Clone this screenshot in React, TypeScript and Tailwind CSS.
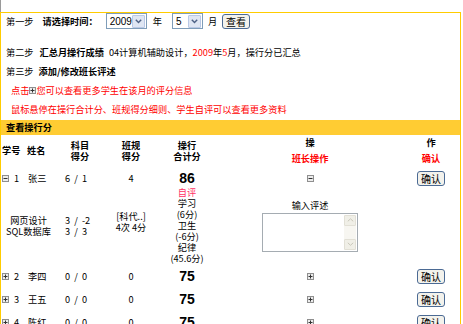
import React from "react";

const cols = "grid grid-cols-[25px_30px_48px_54px_58px_190px_50px]";

interface Student {
  id: number;
  name: string;
  subject: string;
  rule: string;
  total: string;
}

const students: Array<Student> = [
  { id: 2, name: "李四", subject: "0 / 0", rule: "0", total: "75" },
  { id: 3, name: "王五", subject: "0 / 0", rule: "0", total: "75" },
  { id: 4, name: "陈红", subject: "0 / 0", rule: "0", total: "75" },
];

function Toggle({ open }: { open?: boolean }) {
  return (
    <span className="inline-flex h-[7px] w-[7px] shrink-0 items-center justify-center border border-[#8f8f8f] bg-[#ececec]">
      <svg width="5" height="5" viewBox="0 0 5 5">
        <path
          d={open ? "M0.5 2.5h4" : "M0.5 2.5h4M2.5 0.5v4"}
          stroke="#333"
          strokeWidth="1"
        />
      </svg>
    </span>
  );
}

function Select({ value, className }: { value: string; className: string }) {
  return (
    <div
      className={
        "flex h-[16px] items-center justify-between border border-[#7f9db9] bg-white " +
        className
      }
    >
      <span className="pl-[3px] font-['Liberation_Sans',sans-serif] text-[10px] text-black">
        {value}
      </span>
      <span className="mr-px flex h-[13px] w-[13px] items-center justify-center rounded-[1px] border border-[#b9c8e6] bg-[#dfe6f3]">
        <svg width="7" height="5" viewBox="0 0 7 5">
          <path d="M0.8 0.8L3.5 3.6L6.2 0.8" fill="none" stroke="#4d6185" strokeWidth="1.4" />
        </svg>
      </span>
    </div>
  );
}

function Button({ label, className }: { label: string; className: string }) {
  return (
    <span
      className={
        "flex h-[15px] w-[28px] items-center justify-center rounded-[3px] border border-[#4b6a94] bg-[#f3f2ec] text-[10px] text-black " +
        className
      }
    >
      {label}
    </span>
  );
}

function StudentRow({ s }: { s: Student }) {
  return (
    <div className={cols + " h-[23px] items-center"}>
      <div className="flex items-center pl-px">
        <Toggle />
        <span className="ml-[5px]">{s.id}</span>
      </div>
      <div className="pl-[2px]">{s.name}</div>
      <div className="whitespace-pre pl-[9px]">{s.subject.replace(/ /g, "  ")}</div>
      <div className="text-center">{s.rule}</div>
      <div className="text-center font-['Liberation_Sans',sans-serif] text-[14px] font-bold">
        {s.total}
      </div>
      <div className="flex justify-center pr-[2px]">
        <Toggle />
      </div>
      <div className="flex justify-center">
        <Button label="确认" className="" />
      </div>
    </div>
  );
}

export default function App() {
  return (
    <div className="h-[324px] w-[463px] overflow-hidden bg-white font-['Noto_Sans_CJK_SC',sans-serif] text-[9.2px] leading-[11px] text-black">
      <div className="h-[12px] w-px bg-[#9a9a9a]" />
      <div className="w-[461px] border border-[#ffcc00]">
        {/* step 1 */}
        <div className="flex h-[16px] items-center pl-[5px]">
          <span>第一步</span>
          <span className="ml-[9px] font-bold">请选择时间：</span>
          <Select value="2009" className="ml-[8px] w-[41px]" />
          <span className="ml-[6px]">年</span>
          <Select value="5" className="ml-[10px] w-[31px]" />
          <span className="ml-[5px]">月</span>
          <Button label="查看" className="ml-[5px]" />
        </div>

        {/* step 2 */}
        <div className="mt-[15px] flex h-[16px] items-center pl-[5px]">
          <span>第二步</span>
          <span className="ml-[6px] font-bold">汇总月操行成绩</span>
          <span className="ml-[5px]">04计算机辅助设计，</span>
          <span className="text-[#ff0000]">2009</span>
          <span>年</span>
          <span className="text-[#ff0000]">5</span>
          <span>月，操行分已汇总</span>
        </div>

        {/* step 3 */}
        <div className="mt-[3px] flex h-[16px] items-center pl-[5px]">
          <span>第三步</span>
          <span className="ml-[5px] font-bold">添加/修改班长评述</span>
        </div>

        <div className="mt-[4px] flex h-[15px] items-center pl-[10px] text-[#ff0000]">
          <span>点击</span>
          <Toggle />
          <span>您可以查看更多学生在该月的评分信息</span>
        </div>
        <div className="mt-[3px] flex h-[16px] items-center pl-[10px] text-[#ff0000]">
          鼠标悬停在操行合计分、班规得分细则、学生自评可以查看更多资料
        </div>

        {/* bar */}
        <div className="mt-[3px] flex h-[15px] items-center bg-[#ffcc33] pl-[5px] font-bold">
          查看操行分
        </div>

        {/* header */}
        <div className={cols + " h-[31px] items-center font-bold"}>
          <div className="pl-px">学号</div>
          <div className="pl-[1px]">姓名</div>
          <div className="text-center">
            科目
            <br />
            得分
          </div>
          <div className="text-center">
            班规
            <br />
            得分
          </div>
          <div className="text-center">
            操行
            <br />
            合计分
          </div>
          <div className="flex flex-col items-center gap-[4.5px] pr-[2px]">
            <span>操</span>
            <span className="text-[#ff0000]">班长操作</span>
          </div>
          <div className="flex flex-col items-center gap-[4.5px]">
            <span>作</span>
            <span className="text-[#ff0000]">确认</span>
          </div>
        </div>

        {/* row 1 expanded */}
        <div className={cols + " mt-[4px] h-[16px] items-center"}>
          <div className="flex items-center pl-px">
            <Toggle open />
            <span className="ml-[5px]">1</span>
          </div>
          <div className="pl-[2px]">张三</div>
          <div className="whitespace-pre pl-[9px]">6  /  1</div>
          <div className="text-center">4</div>
          <div className="text-center font-['Liberation_Sans',sans-serif] text-[14px] font-bold">
            86
          </div>
          <div className="flex justify-center pr-[2px]">
            <Toggle open />
          </div>
          <div className="flex justify-center">
            <Button label="确认" className="" />
          </div>
        </div>

        <div className={cols + " h-[79px] items-center"}>
          <div className="col-span-2 text-center">
            网页设计
            <br />
            SQL数据库
          </div>
          <div className="whitespace-pre pl-[9px]">
            {"3  /  -2"}
            <br />
            {"3  /  3"}
          </div>
          <div className="pb-[8px] text-center">
            [科代..]
            <br />
            4次 4分
          </div>
          <div className="text-center leading-[11px]">
            <span className="text-[#ff3366]">自评</span>
            <br />
            学习
            <br />
            (6分)
            <br />
            卫生
            <br />
            (-6分)
            <br />
            纪律
            <br />
            (45.6分)
          </div>
          <div className="flex flex-col items-center pr-[2px]">
            <span>输入评述</span>
            <div className="mt-[2px] flex h-[39px] w-[96px] justify-end border border-[#a5acb2] bg-white p-px">
              <div className="flex w-[12px] flex-col justify-between bg-[#f7f6f1]">
                <span className="flex h-[11px] items-center justify-center rounded-[1px] border border-[#e2e0d6] bg-[#f0efe7]">
                  <svg width="7" height="4" viewBox="0 0 7 4">
                    <path d="M0.8 3.3L3.5 0.8L6.2 3.3" fill="none" stroke="#c9c7ba" strokeWidth="1" />
                  </svg>
                </span>
                <span className="flex h-[11px] items-center justify-center rounded-[1px] border border-[#e2e0d6] bg-[#f0efe7]">
                  <svg width="7" height="4" viewBox="0 0 7 4">
                    <path d="M0.8 0.8L3.5 3.3L6.2 0.8" fill="none" stroke="#c9c7ba" strokeWidth="1" />
                  </svg>
                </span>
              </div>
            </div>
          </div>
          <div />
        </div>

        {students.map((s) => (
          <StudentRow key={s.id} s={s} />
        ))}
      </div>
    </div>
  );
}
